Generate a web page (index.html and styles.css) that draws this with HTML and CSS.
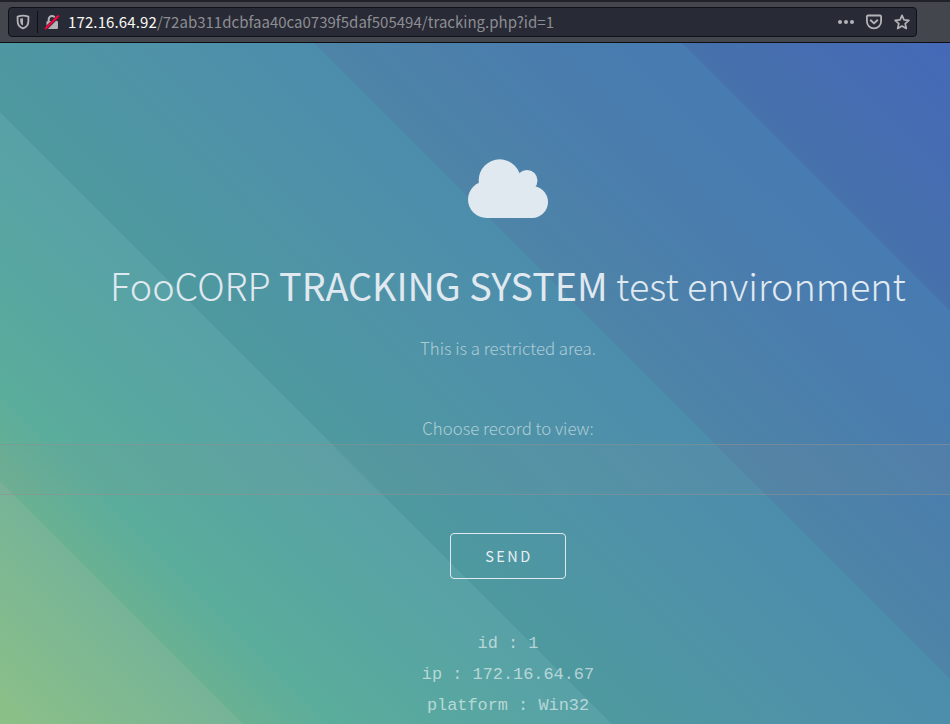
FILE: index.html
```
<!DOCTYPE html>
<html lang="en">
<head>
<meta charset="utf-8">
<title>FooCORP Tracking System</title>
<link rel="stylesheet" href="styles.css">
</head>
<body>
<div class="toolbar">
  <div class="urlbar">
    <svg class="shield" width="14" height="16" viewBox="0 0 14 16"><path d="M7 1.600C5.200 1.600 3.300 2 1.600 2.600V7c0 3.600 2 6.400 5.400 7.400 3.400-1 5.400-3.800 5.400-7.400V2.600C10.700 2 8.800 1.600 7 1.600Z" fill="none" stroke="#b3b4b8" stroke-width="1.800" stroke-linejoin="round"/><path d="M7 4.200v7.400C5 10.700 4.200 9 4.200 7V4.600Z" fill="#b3b4b8"/></svg>
    <span class="divider"></span>
    <svg class="lock" width="16" height="16" viewBox="0 0 16 16"><path d="M4.700 7V5.200a3.300 3.300 0 0 1 6.600 0V7" fill="none" stroke="#b3b4b8" stroke-width="2"/><rect x="2.500" y="7" width="11.500" height="8" rx="1.200" fill="#b3b4b8"/><path d="M.8 15.600 14.800 1.600" stroke="#282a36" stroke-width="3.400"/><path d="M1.200 15 14.600 1.600" stroke="#f4063c" stroke-width="2.200"/></svg>
    <span class="url"><b>172.16.64.92</b>/72ab311dcbfaa40ca0739f5daf505494/tracking.php?id=1</span>
    <svg class="dots" width="16" height="16" viewBox="0 0 16 16"><g fill="#b3b4b8"><circle cx="2" cy="8" r="2"/><circle cx="8" cy="8" r="2"/><circle cx="14" cy="8" r="2"/></g></svg>
    <svg class="pocket" width="16" height="16" viewBox="0 0 16 16"><path d="M1.800 1.500h12.400a.9.9 0 0 1 .9.900v4.900a7.100 7.100 0 0 1-14.200 0V2.400a.9.9 0 0 1 .9-.9Z" fill="none" stroke="#b3b4b8" stroke-width="1.800"/><path d="m4.700 6.300 3.300 3.100 3.300-3.100" fill="none" stroke="#b3b4b8" stroke-width="1.900" stroke-linecap="round" stroke-linejoin="round"/></svg>
    <svg class="star" width="16" height="16" viewBox="0 0 16 16"><path d="m8 1.300 2 4.500 4.900.5-3.700 3.300 1.100 4.900L8 12l-4.300 2.500 1.100-4.900L1.100 6.300 6 5.800Z" fill="none" stroke="#b3b4b8" stroke-width="1.700" stroke-linejoin="round"/></svg>
  </div>
</div>
<main class="page">
  <svg class="cloud" width="80" height="59" viewBox="0 0 80 59"><g fill="#e0e9f0"><circle cx="31.700" cy="21.300" r="21"/><circle cx="59" cy="21.500" r="10.500"/><circle cx="18.500" cy="40.500" r="18.500"/><circle cx="64" cy="43" r="16"/><path d="M18.500 24H58v6h6v29H18.500Z"/></g></svg>
  <h1>FooCORP <strong>TRACKING SYSTEM</strong> test environment</h1>
  <p class="notice">This is a restricted area.</p>
  <form class="record" onsubmit="return false">
    <label for="rec">Choose record to view:</label>
    <input id="rec" type="text">
    <button type="submit">SEND</button>
  </form>
  <pre class="result">id : 1
ip : 172.16.64.67
platform : Win32</pre>
</main>
</body>
</html>
```
FILE: styles.css
```
* { box-sizing: border-box; }
body {
  margin: 0;
  width: 950px;
  height: 724px;
  overflow: hidden;
  display: flex;
  flex-direction: column;
  font-family: "Noto Sans CJK SC", "Noto Sans", sans-serif;
}
.toolbar {
  flex: none;
  height: 43px;
  padding: 5px 0 0 8px;
  background: #43464c;
  border-top: 2px solid #202129;
  border-bottom: 1px solid #0d0e12;
}
.urlbar {
  width: 909px;
  height: 30px;
  display: flex;
  align-items: center;
  padding: 0 6px 0 7px;
  background: #282a36;
  border: 1px solid #101116;
  border-radius: 4px;
}
.urlbar svg { flex: none; }
.divider { width: 1px; height: 22px; margin: 0 6px 0 7px; background: #101116; }
.url {
  flex: 1;
  margin-left: 8px;
  font: 15px/22px "Noto Sans CJK SC", sans-serif;
  letter-spacing: .01px;
  color: #8d8e93;
  white-space: nowrap;
}
.url b { font-weight: 400; letter-spacing: .12px; color: #f8f8f2; }
.pocket, .star { margin-left: 12px; }
.page {
  flex: 1;
  min-height: 0;
  display: flex;
  flex-direction: column;
  align-items: center;
  padding: 116px 0 0;
  background: linear-gradient(45deg,
    #8cc086 0, #76b498 171px,
    #6ab192 172px, #5bad9b 235px, #58a6a1 335px, #58a1a7 432px,
    #4e999f 433px, #4f93a7 560px, #4c8dac 703px,
    #4e84a7 704px, #4a7dad 850px, #477bb1 963px,
    #4671ab 965px, #4569b8 100%);
}
.cloud { flex: none; margin-left: 66px; }
h1 {
  margin: 37px -60px 0 6px;
  font-size: 37.750px;
  line-height: 60px;
  font-weight: 200;
  color: #e0e9f0;
  white-space: nowrap;
}
h1 strong { font-weight: 400; }
.notice, .record label {
  margin: 18px 0 0 66px;
  font-size: 16.800px;
  line-height: 30px;
  font-weight: 300;
  color: rgba(255,255,255,.55);
}
.record {
  width: 100%;
  display: flex;
  flex-direction: column;
  align-items: center;
  margin-top: 50px;
}
.record label { margin-top: 0; }
.record input {
  width: calc(100% + 4px);
  height: 51px;
  margin-top: 1px;
  border: 1px solid rgba(144,144,144,.5);
  background: rgba(144,144,144,.1);
}
.record button {
  width: 116px;
  height: 46px;
  margin: 38px 0 0 66px;
  padding: 0 0 0 2px;
  border: 1px solid #e0e9f0;
  border-radius: 4px;
  background: none;
  color: #e6eff2;
  font: 400 14.500px/44px "Noto Sans CJK SC", sans-serif;
  letter-spacing: 2.500px;
}
.result {
  margin: 49px 0 0 66px;
  font: 16.900px/31px "Liberation Mono", monospace;
  color: rgba(255,255,255,.58);
  text-align: center;
}
```
